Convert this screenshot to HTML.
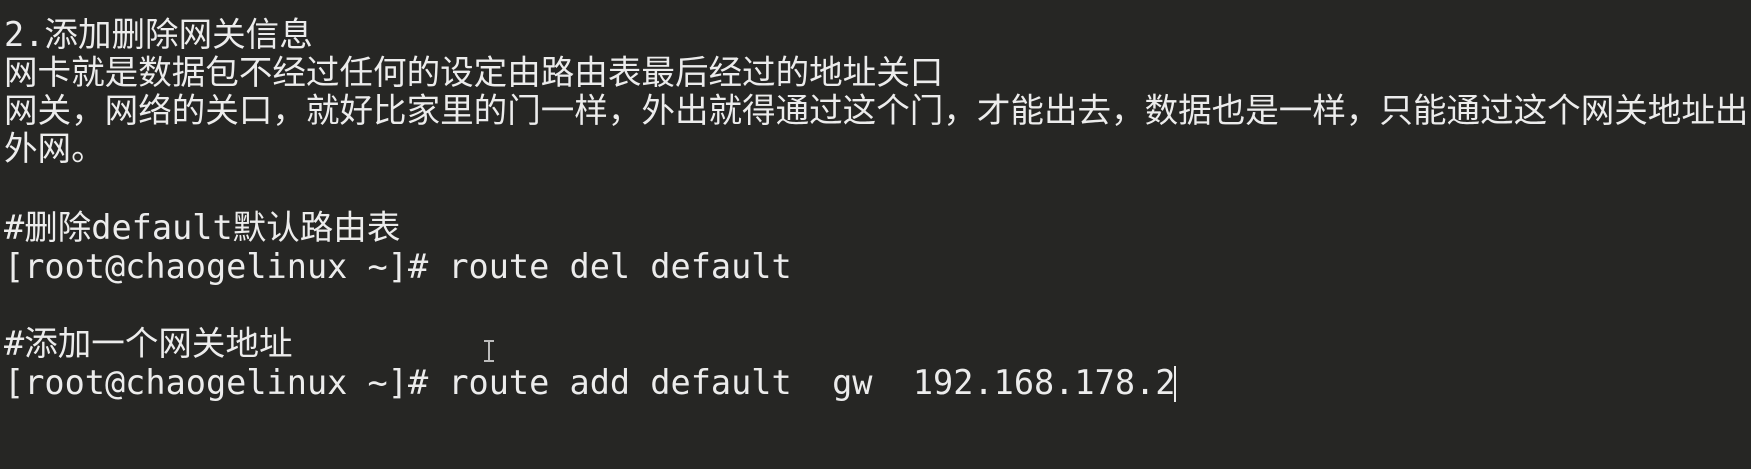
<!DOCTYPE html>
<html><head><meta charset="utf-8"><style>
html,body{margin:0;padding:0;background:#262624;width:1751px;height:469px;overflow:hidden}
.l{position:absolute;left:4px;white-space:pre;color:#ececec;font-family:"DejaVu Sans Mono","Noto Sans CJK SC",monospace;font-size:33.55px;line-height:38px;height:38px}
</style></head><body>
<div class="l" style="top:16px">2.添加删除网关信息</div>
<div class="l" style="top:54px">网卡就是数据包不经过任何的设定由路由表最后经过的地址关口</div>
<div class="l" style="top:92px">网关，网络的关口，就好比家里的门一样，外出就得通过这个门，才能出去，数据也是一样，只能通过这个网关地址出</div>
<div class="l" style="top:130px">外网。</div>
<div class="l" style="top:209px">#删除default默认路由表</div>
<div class="l" style="top:248px">[root@chaogelinux ~]# route del default</div>
<div class="l" style="top:325px">#添加一个网关地址</div>
<div class="l" style="top:364px">[root@chaogelinux ~]# route add default  gw  192.168.178.2</div>
<div style="position:absolute;left:1174px;top:366px;width:2px;height:36px;background:#ececec"></div>
<div style="position:absolute;left:488px;top:340px;width:2px;height:22px;background:#bbb"></div>
<div style="position:absolute;left:484px;top:340px;width:10px;height:2px;background:#bbb"></div>
<div style="position:absolute;left:484px;top:360px;width:10px;height:2px;background:#bbb"></div>
</body></html>
